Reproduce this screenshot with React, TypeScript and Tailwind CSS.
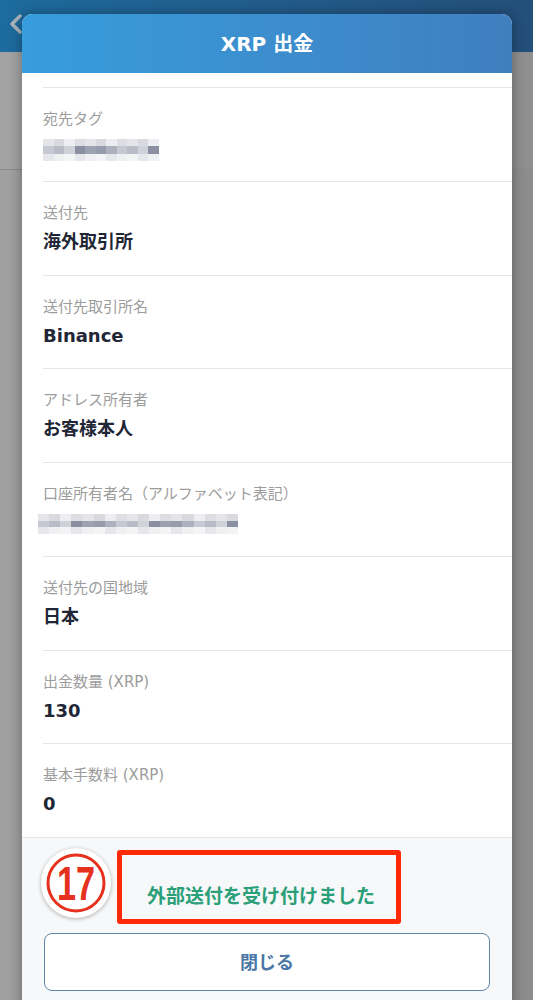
const FONT = { fontFamily: '"DejaVu Sans", "Noto Sans CJK JP", sans-serif' };

type Row = { label: string; value?: string; blur?: number[] };

const ROWS: Row[] = [
  { label: '宛先タグ', blur: [116, 22] },
  { label: '送付先', value: '海外取引所' },
  { label: '送付先取引所名', value: 'Binance' },
  { label: 'アドレス所有者', value: 'お客様本人' },
  { label: '口座所有者名（アルファベット表記）', blur: [200, 20] },
  { label: '送付先の国地域', value: '日本' },
  { label: '出金数量 (XRP)', value: '130' },
  { label: '基本手数料 (XRP)', value: '0' },
];

// pixelated (mosaic) value
function Blurred({ w, h }: { w: number; h: number }) {
  const cells = Math.round(w / 11);
  const mid = ['#b9bcc6', '#9da2b1', '#c6c9d1', '#8a90a2', '#adb1bd', '#d0d2d9', '#979cac'];
  const top = ['#e4e5e9', '#d8dae0', '#eceef1', '#dcdee3'];
  const bot = ['#eff0f2', '#e6e7eb', '#f3f4f5'];
  return (
    <div className="flex flex-col" style={{ width: w, height: h }}>
      {[top, mid, bot].map((row, r) => (
        <div key={r} className="flex flex-1">
          {Array.from({ length: cells }).map((_, i) => (
            <div key={i} className="flex-1" style={{ background: row[(i * 5 + r * 2) % row.length] }} />
          ))}
        </div>
      ))}
    </div>
  );
}

export default function App() {
  return (
    <div className="relative w-[533px] h-[1000px] overflow-hidden bg-[#9b9b9b]" style={FONT}>
      {/* page behind the sheet */}
      <div className="h-[52px] bg-gradient-to-r from-[#1d6c9f] to-[#244f7b] flex items-start pl-[8px] pt-[14px]">
        <svg width="16" height="20" viewBox="0 0 16 20" fill="none">
          <path d="M12 2 L4 10 L12 18" stroke="#aab4bd" strokeWidth="3.5" strokeLinecap="round" strokeLinejoin="round" />
        </svg>
      </div>
      <div className="h-[118px] border-b border-[#8a8a8a] bg-gradient-to-r from-[#a3a3a3] to-[#8f8f8f]" />
      <div className="h-full bg-gradient-to-r from-[#a0a0a0] to-[#8c8c8c]" />

      {/* sheet */}
      <div className="absolute left-[22px] top-[14px] w-[490px] h-[1000px] rounded-t-[10px] overflow-hidden bg-white shadow-[0_0_14px_rgba(0,0,0,0.35)] flex flex-col">
        <div className="h-[59px] shrink-0 bg-gradient-to-r from-[#379ddc] to-[#3f7fc0] flex items-center justify-center">
          <h1 className="text-white text-[20px] font-bold">XRP 出金</h1>
        </div>

        <div className="pt-[14px]">
          {ROWS.map((r) => (
            <div key={r.label} className="ml-[21px] h-[93.75px] border-t border-[#e6e6e6] pt-[20px]">
              <p className="text-[15px] leading-[22px] text-[#9c9c9c]">{r.label}</p>
              {r.value ? (
                <p className="mt-[5px] text-[18px] leading-[26px] font-bold text-[#1f2636]">{r.value}</p>
              ) : (
                <div className="mt-[9px]" style={{ marginLeft: r.blur![0] > 150 ? -5 : 0 }}>
                  <Blurred w={r.blur![0]} h={r.blur![1]} />
                </div>
              )}
            </div>
          ))}
        </div>

        <div className="relative flex-1 border-t border-[#e6e6e6] bg-[#f7f8f9] px-[22px] pt-[46px]">
          <p className="text-center text-[19px] leading-[24px] font-bold text-[#2a9f78] pr-[12px]">
            外部送付を受け付けました
          </p>
          <button className="mt-[25px] w-full h-[58px] rounded-[8px] border-[1.5px] border-[#5f86ad] bg-white text-[18px] font-bold text-[#4a77a5]">
            閉じる
          </button>

          {/* annotations */}
          <div className="absolute left-[19px] top-[10px] w-[70px] h-[70px] rounded-full bg-white shadow-[0_1px_4px_rgba(0,0,0,0.3)]">
            <svg width="70" height="70" viewBox="0 0 70 70" overflow="visible">
              <circle cx="35" cy="35" r="28" fill="none" stroke="#e5311d" strokeWidth="3" />
              <text
                x="35"
                y="52"
                textAnchor="middle"
                fontFamily='"Liberation Sans", sans-serif'
                fontWeight="bold"
                fontSize="48"
                fill="#e5311d"
                textLength="38"
                lengthAdjust="spacingAndGlyphs"
              >
                17
              </text>
            </svg>
          </div>
          <div className="absolute left-[95px] top-[12px] w-[284px] h-[74px] rounded-[3px] border-[5px] border-[#fd2a05]" />
        </div>
      </div>
    </div>
  );
}
